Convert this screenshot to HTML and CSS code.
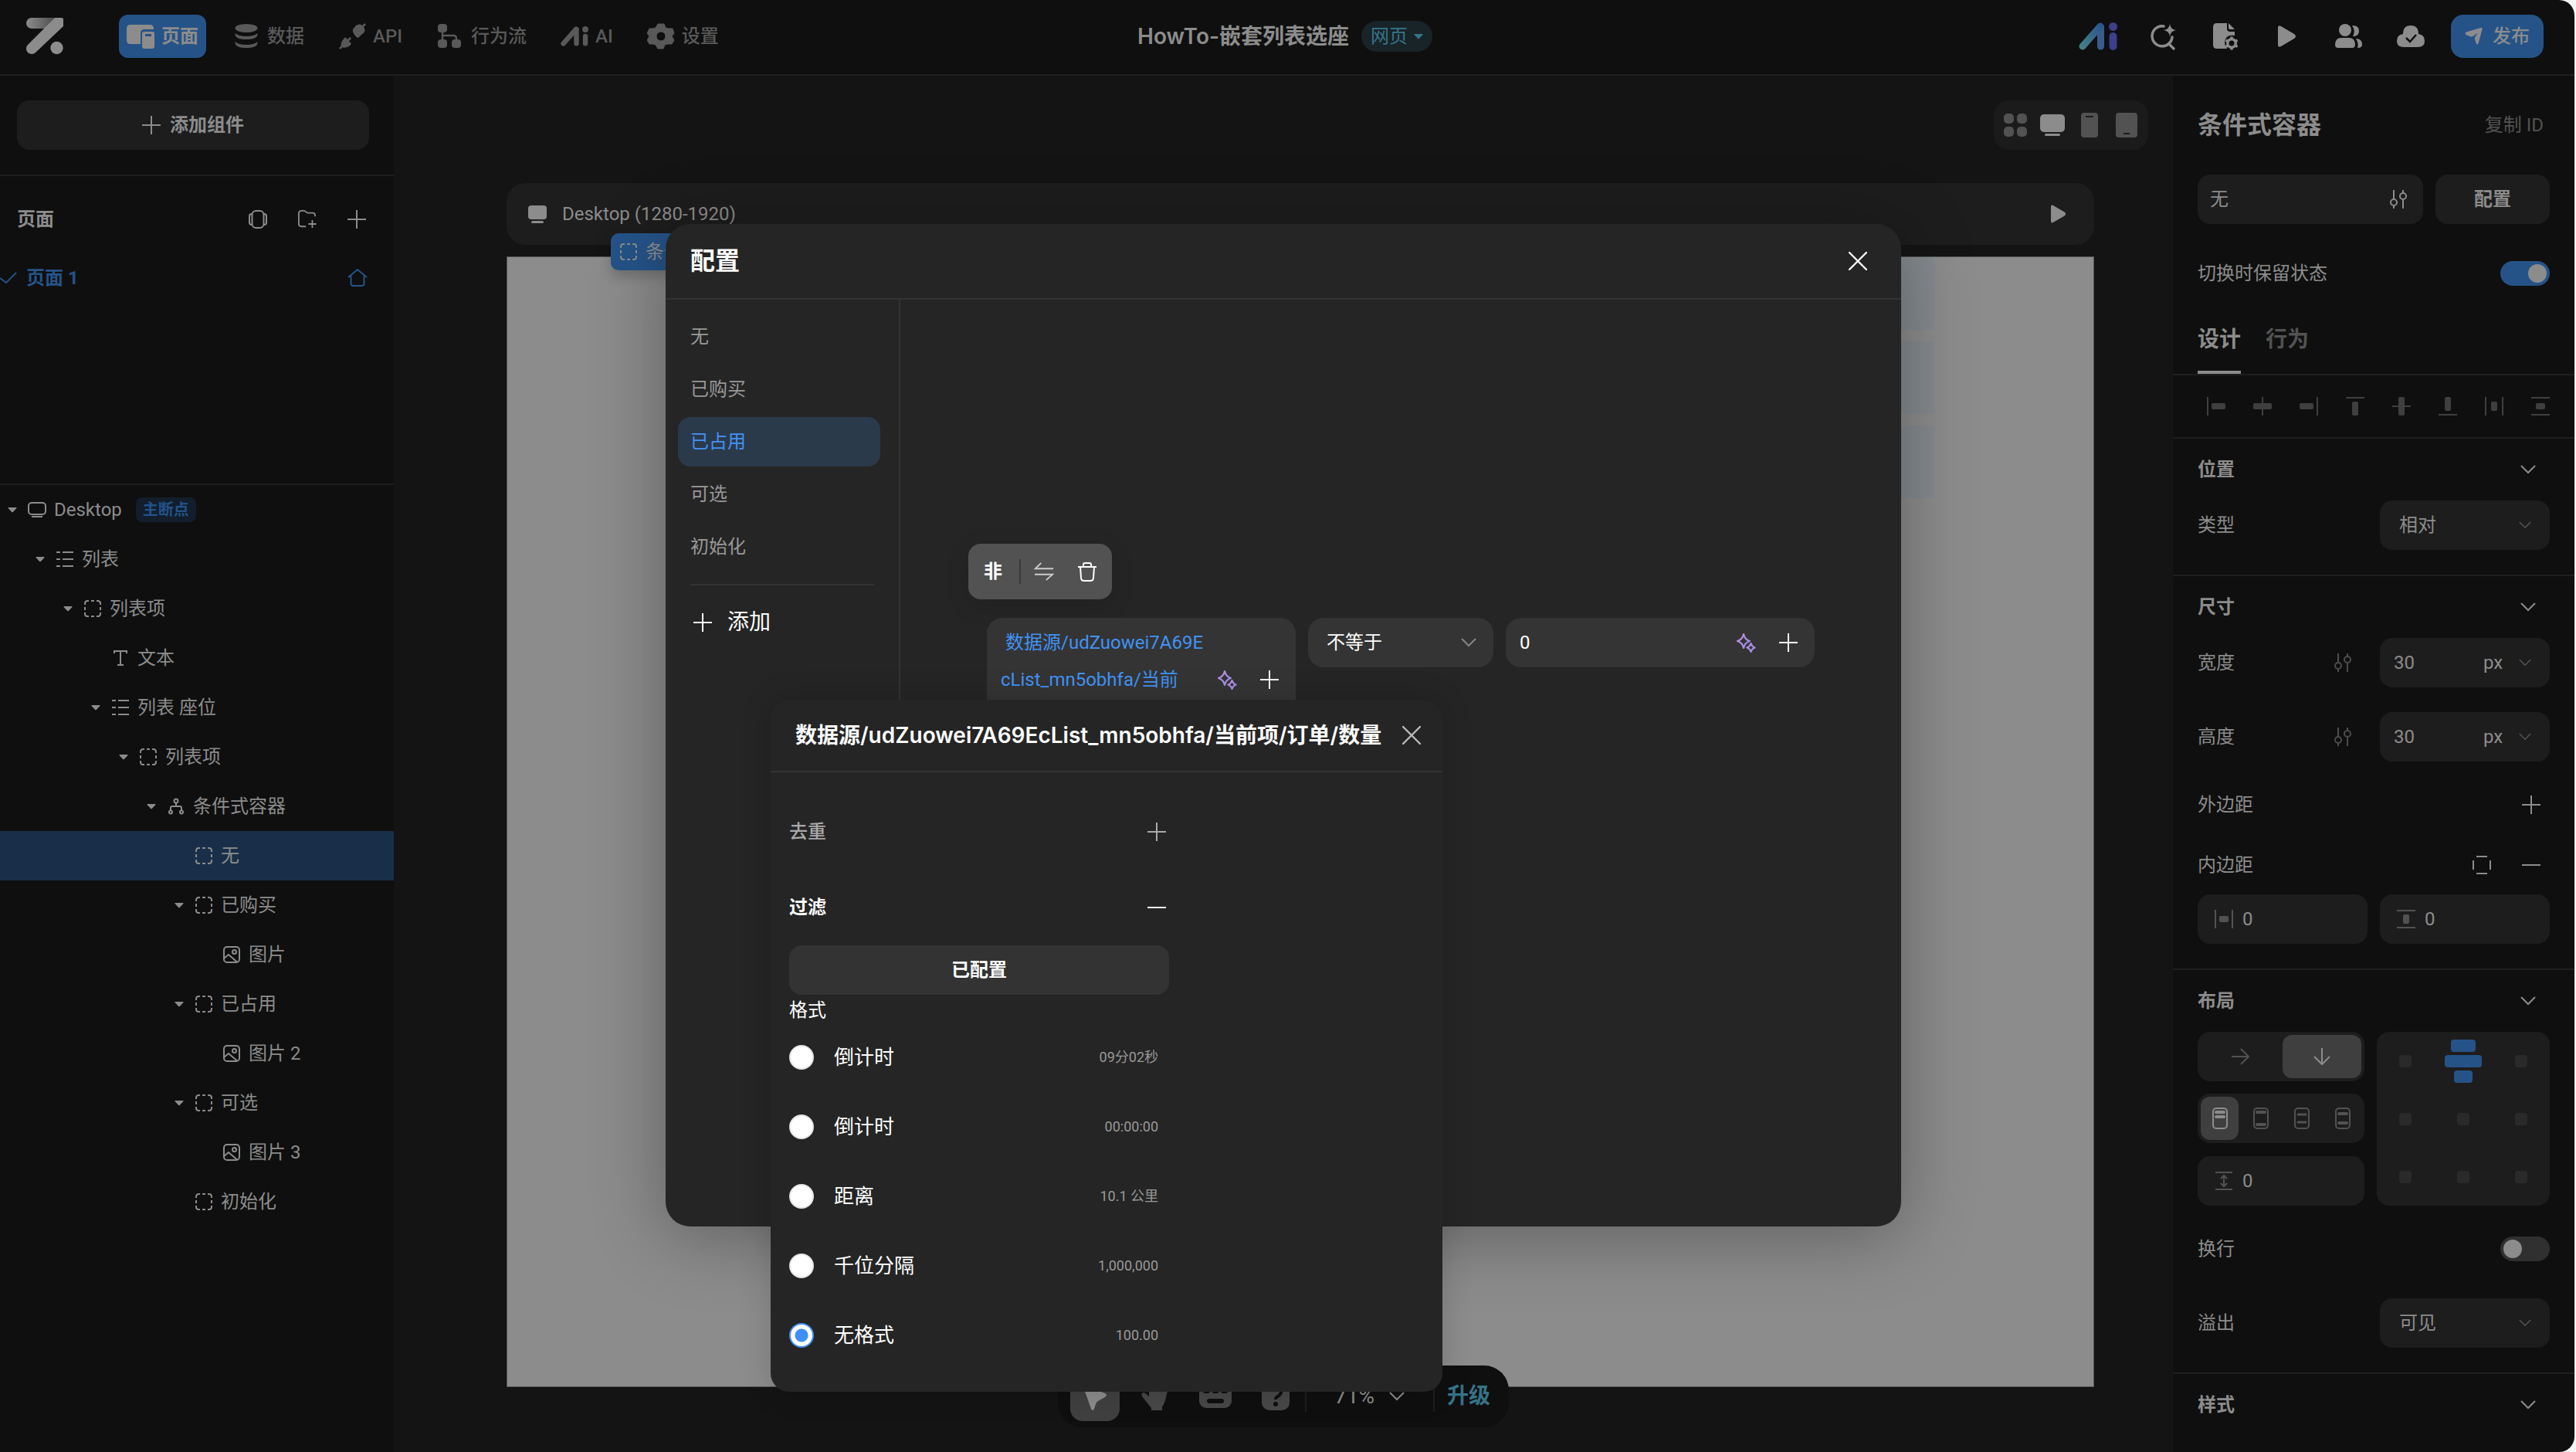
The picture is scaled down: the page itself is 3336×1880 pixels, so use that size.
FILE: index.html
```html
<!DOCTYPE html>
<html lang="zh-CN">
<head>
<meta charset="utf-8">
<title>HowTo-嵌套列表选座</title>
<link rel="stylesheet" href="styles.css">
</head>
<body>
<svg class="sprite" aria-hidden="true">
  <defs>
    <linearGradient id="ai-grad" gradientUnits="userSpaceOnUse" x1="3" y1="33" x2="30" y2="3"><stop offset="0" stop-color="#46808a"/><stop offset="1" stop-color="#28558c"/></linearGradient>
    <linearGradient id="spark-grad" x1="0" y1="0" x2="1" y2="1"><stop offset="0" stop-color="#c58be0"/><stop offset="1" stop-color="#8f8fe8"/></linearGradient>
    <linearGradient id="logo-grad" x1="0" y1="0" x2="1" y2="0"><stop offset="0" stop-color="#8c8c8c"/><stop offset="1" stop-color="#4c4c4c"/></linearGradient>
  </defs>
  <symbol id="i-plus" viewBox="0 0 24 24"><path d="M12 0v24M0 12h24" fill="none" stroke="currentColor" stroke-width="2"/></symbol>
  <symbol id="i-minus" viewBox="0 0 24 24"><path d="M0 12h24" fill="none" stroke="currentColor" stroke-width="2"/></symbol>
  <symbol id="i-close" viewBox="0 0 24 24"><path d="M1 1l22 22M23 1L1 23" fill="none" stroke="currentColor" stroke-width="2.4" stroke-linecap="round"/></symbol>
  <symbol id="i-down" viewBox="0 0 20 20"><path d="M1 5l9 9 9-9" fill="none" stroke="currentColor" stroke-width="2"/></symbol>
  <symbol id="i-caret" viewBox="0 0 12 12"><path d="M1 3h10q1 0 .4.9L7 8.8q-1 1-2 0L.6 3.900Q0 3 1 3z" fill="currentColor"/></symbol>
  <symbol id="i-desktop" viewBox="0 0 28 28"><rect x="2" y="3" width="24" height="18" rx="4" fill="currentColor"/><rect x="6" y="23" width="16" height="3" rx="1.500" fill="currentColor"/></symbol>
  <symbol id="i-desktop-line" viewBox="0 0 24 24"><rect x="1" y="3" width="22" height="15" rx="4" fill="none" stroke="currentColor" stroke-width="2"/><path d="M5 21h14" stroke="currentColor" stroke-width="2"/></symbol>
  <symbol id="i-list" viewBox="0 0 24 24"><path d="M1 3h5M9 3h14M1 12h5M9 12h14M1 21h5M9 21h14" stroke="currentColor" stroke-width="2"/></symbol>
  <symbol id="i-box" viewBox="0 0 24 24"><path d="M2 7V5.500Q2 2 5.500 2H7M10 2h4M17 2h1.500Q22 2 22 5.500V7M22 10v4M22 17v1.500Q22 22 18.500 22H17M14 22h-4M7 22H5.500Q2 22 2 18.500V17M2 14v-4" fill="none" stroke="currentColor" stroke-width="2"/></symbol>
  <symbol id="i-text" viewBox="0 0 24 24"><path d="M4 6V3h16v3M12 3v18M8 21h8" fill="none" stroke="currentColor" stroke-width="2"/></symbol>
  <symbol id="i-nodes" viewBox="0 0 24 24"><g fill="none" stroke="currentColor" stroke-width="2"><circle cx="12" cy="5" r="2.500"/><circle cx="5" cy="19.500" r="2"/><circle cx="19" cy="19.500" r="2"/><path d="M12 8v4M5 17v-3q0-2 2-2h10q2 0 2 2v3"/></g></symbol>
  <symbol id="i-image" viewBox="0 0 24 24"><g fill="none" stroke="currentColor" stroke-width="2"><rect x="2" y="2" width="20" height="20" rx="4"/><circle cx="15.500" cy="8.500" r="2.500"/><path d="M2 17l6-5 11 9.500"/></g></symbol>
  <symbol id="i-tune" viewBox="0 0 24 24"><g fill="none" stroke="currentColor" stroke-width="2"><path d="M6 0v13M6 20v4M18 4V0M18 11v13"/><circle cx="6" cy="16" r="4"/><circle cx="18" cy="8" r="4"/></g></symbol>
  <symbol id="i-play" viewBox="0 0 24 28"><path d="M0 3q0-4 4-2l17 10q4 3 0 6L4 27q-4 2-4-2z" fill="currentColor"/></symbol>
  <symbol id="i-spark" viewBox="0 0 26 26"><g fill="none" stroke="url(#spark-grad)" stroke-width="2.200" stroke-linejoin="round"><path d="M10 2q1.500 7 8 9-6.500 2-8 9-1.500-7-8-9 6.500-2 8-9z"/><path d="M19.500 14q1 4 5 5.500-4 1.500-5 5.500-1-4-5-5.500 4-1.500 5-5.500z"/></g></symbol>
  <symbol id="i-ai" viewBox="0 0 50 36"><g fill="none" stroke-linecap="round" stroke-width="9"><path d="M5 31L28 5"/><path d="M28.500 6v25M44.500 18v13"/></g><circle cx="44.500" cy="5.500" r="5.500" fill="currentColor" stroke="none"/></symbol>
  <symbol id="i-pages" viewBox="0 0 36 36"><path d="M5 3h25q5 0 5 5v1H23q-5 0-5 5v14H5q-5 0-5-5V8q0-5 5-5z" fill="currentColor"/><path fill-rule="evenodd" d="M23 12h10q3 0 3 3v16q0 3-3 3H23q-3 0-3-3V15q0-3 3-3zm1 3v3h8v-3z" fill="currentColor"/></symbol>
  <symbol id="i-data" viewBox="0 0 36 36"><g fill="currentColor"><ellipse cx="18" cy="7.500" rx="14.500" ry="5.500"/><path d="M3.500 14q4.500 4 14.500 4t14.500-4q1 8-14.500 8T3.500 14zM3.500 25q4.500 4 14.500 4t14.500-4q1 8-14.500 8T3.500 25z"/></g></symbol>
  <symbol id="i-api" viewBox="0 0 36 36"><g fill="currentColor"><path d="M19 9l4-5q6-4 10 2t-3 10l-4 4q-2 0-5-4t-2-7zM5 24l4-5 3 3 3-3 2 2-3 3 3 4-3 3q-6 3-9 1t0-8z"/><path d="M31 6l4-4M2 34l5-5" stroke="currentColor" stroke-width="2.500"/></g></symbol>
  <symbol id="i-flow" viewBox="0 0 36 36"><g fill="currentColor"><rect x="2" y="2" width="12" height="11" rx="4"/><rect x="2" y="22" width="12" height="11" rx="4"/><rect x="20" y="22" width="12" height="11" rx="4"/></g><path d="M8 10v14M8 17h14q4 0 4 4v3" fill="none" stroke="currentColor" stroke-width="2.500"/></symbol>
  <symbol id="i-gear" viewBox="0 0 36 36"><path fill-rule="evenodd" fill="currentColor" d="M14 2h8l2 5 4 1 5 0 2 6-3 4 3 5-3 5-6 0-3 1-2 5h-7l-3-5-3-1-5 0-3-5 3-5-3-4 3-6 5 0 3-1zM18 12a6 6 0 100 12 6 6 0 000-12z" stroke="currentColor" stroke-linejoin="round"/></symbol>
  <symbol id="i-send" viewBox="0 0 26 26"><path d="M22 1q3-1 2.500 2L19 23q-1 3-3 0l-2-6q-.5-2 1.500-4.500l3-4.500-6 4.500q-2 1.500-4 1L2 11q-3-2 0-4z" fill="currentColor"/></symbol>
</svg>

<div class="app">
  <header class="topbar">
    <nav class="topnav">
      <a class="logo" href="#" aria-label="首页"><svg viewBox="0 0 48 48"><path d="M7 0h31v14H7A7 7 0 017 0z" fill="url(#logo-grad)"/><path d="M37 0h9q2 0 2 2v9L12 45A7 7 0 012 35z" fill="#8c8c8c"/><circle cx="39.500" cy="39" r="8.200" fill="#8c8c8c"/></svg></a>
      <a class="navitem is-active" href="#"><svg><use href="#i-pages"/></svg>页面</a>
      <a class="navitem" href="#"><svg><use href="#i-data"/></svg>数据</a>
      <a class="navitem" href="#"><svg><use href="#i-api"/></svg>API</a>
      <a class="navitem" href="#"><svg><use href="#i-flow"/></svg>行为流</a>
      <a class="navitem" href="#"><svg class="ai-mono"><use href="#i-ai"/></svg>AI</a>
      <a class="navitem" href="#"><svg><use href="#i-gear"/></svg>设置</a>
    </nav>
    <div class="project">
      <h1>HowTo-嵌套列表选座</h1>
      <button class="kind" type="button">网页<svg><use href="#i-caret"/></svg></button>
    </div>
    <div class="actions">
      <button class="action action-ai" type="button" aria-label="AI"><svg viewBox="0 0 50 36"><path d="M28.500 6v25" stroke="#3a5c8c" stroke-width="9" stroke-linecap="round"/><path d="M5 31L28 5" fill="none" stroke="url(#ai-grad)" stroke-linecap="round" stroke-width="9"/><path d="M44.500 18v13" stroke="#3b3f8c" stroke-width="10" stroke-linecap="round"/><circle cx="44.500" cy="5.500" r="5.500" fill="#3b3f8c"/></svg></button>
      <button class="action" type="button" aria-label="搜索"><svg viewBox="0 0 36 36"><path d="M18 5A13 13 0 1029 19M25 28l6 6" fill="none" stroke="currentColor" stroke-width="3.500" stroke-linecap="round"/><path d="M26 2q1 7 8 8-7 1-8 8-1-7-8-8 7-1 8-8z" fill="currentColor"/></svg></button>
      <button class="action" type="button" aria-label="页面设置"><svg viewBox="0 0 36 36"><path d="M7 1h13v7q0 4 4 4h6v5q-12-2-13 9 0 4 3 8H7q-5 0-5-5V6q0-5 5-5z" fill="currentColor"/><path d="M22 1l8 8h-6q-2 0-2-2z" fill="currentColor"/><circle cx="26" cy="27" r="5" fill="none" stroke="currentColor" stroke-width="4"/><path d="M26 18.500v17M18.500 23l15 8.500M18.500 31.500l15-8.500" stroke="currentColor" stroke-width="3.500"/><circle cx="26" cy="27" r="3.500" fill="#0f0f0f"/></svg></button>
      <button class="action" type="button" aria-label="预览"><svg class="play"><use href="#i-play"/></svg></button>
      <button class="action" type="button" aria-label="协作"><svg viewBox="0 0 36 36"><g fill="currentColor"><circle cx="13" cy="10" r="8"/><path d="M0 29q0-9 8-9h10q8 0 8 9 0 4-4 4H4q-4 0-4-4z"/><path d="M22 4q9 0 9 7t-8 7q4-7-1-14zM27 21q8 0 8 8 0 4-6 4 2-6-2-12z"/></g></svg></button>
      <button class="action" type="button" aria-label="已保存"><svg viewBox="0 0 36 36"><path d="M9 32q-9 0-9-8t8-9q0-11 10-11t10 11q8 1 8 9t-9 8z" fill="currentColor"/><path d="M12 20l5 5 8-9" fill="none" stroke="#0f0f0f" stroke-width="2.500"/></svg></button>
      <button class="publish" type="button"><svg><use href="#i-send"/></svg>发布</button>
    </div>
  </header>

  <div class="workspace">
    <aside class="left">
      <div class="addwrap"><button class="addcomp" type="button"><svg><use href="#i-plus"/></svg>添加组件</button></div>
      <section class="pages">
        <div class="pages-head">
          <h2>页面</h2>
          <button type="button" aria-label="弹窗"><svg viewBox="0 0 24 24"><g fill="none" stroke="currentColor" stroke-width="2"><rect x="4.500" y="1" width="15" height="22" rx="5"/><path d="M4 5q-3 0-3 3v8q0 3 3 3M20 5q3 0 3 3v8q0 3-3 3"/></g></svg></button>
          <button type="button" aria-label="新建文件夹"><svg viewBox="0 0 26 26"><path d="M11 23H5q-4 0-4-4V5q0-4 4-4h3q2 0 3 1.500T14 4h6q4 0 4 4v1M20 14v11M14.500 19.500h11" fill="none" stroke="currentColor" stroke-width="2"/></svg></button>
          <button type="button" aria-label="新建页面"><svg><use href="#i-plus"/></svg></button>
        </div>
        <a class="pagerow" href="#">
          <svg viewBox="0 0 22 16"><path d="M0 8l8 6L21 1" fill="none" stroke="currentColor" stroke-width="2"/></svg>
          <span>页面 1</span>
          <svg class="home" viewBox="0 0 26 24"><path d="M1 11L13 1l12 10M4.500 9v10q0 3 3 3h11q3 0 3-3V9" fill="none" stroke="currentColor" stroke-width="2"/></svg>
        </a>
      </section>
      <ul class="tree">
        <li class="lv0"><svg class="caret"><use href="#i-caret"/></svg><svg class="ico"><use href="#i-desktop-line"/></svg>Desktop<em>主断点</em></li>
        <li class="lv1"><svg class="caret"><use href="#i-caret"/></svg><svg class="ico"><use href="#i-list"/></svg>列表</li>
        <li class="lv2"><svg class="caret"><use href="#i-caret"/></svg><svg class="ico"><use href="#i-box"/></svg>列表项</li>
        <li class="lv3"><span class="caret"></span><svg class="ico"><use href="#i-text"/></svg>文本</li>
        <li class="lv3"><svg class="caret"><use href="#i-caret"/></svg><svg class="ico"><use href="#i-list"/></svg>列表 座位</li>
        <li class="lv4"><svg class="caret"><use href="#i-caret"/></svg><svg class="ico"><use href="#i-box"/></svg>列表项</li>
        <li class="lv5"><svg class="caret"><use href="#i-caret"/></svg><svg class="ico"><use href="#i-nodes"/></svg>条件式容器</li>
        <li class="lv6 is-selected"><span class="caret"></span><svg class="ico"><use href="#i-box"/></svg>无</li>
        <li class="lv6"><svg class="caret"><use href="#i-caret"/></svg><svg class="ico"><use href="#i-box"/></svg>已购买</li>
        <li class="lv7"><span class="caret"></span><svg class="ico"><use href="#i-image"/></svg>图片</li>
        <li class="lv6"><svg class="caret"><use href="#i-caret"/></svg><svg class="ico"><use href="#i-box"/></svg>已占用</li>
        <li class="lv7"><span class="caret"></span><svg class="ico"><use href="#i-image"/></svg>图片 2</li>
        <li class="lv6"><svg class="caret"><use href="#i-caret"/></svg><svg class="ico"><use href="#i-box"/></svg>可选</li>
        <li class="lv7"><span class="caret"></span><svg class="ico"><use href="#i-image"/></svg>图片 3</li>
        <li class="lv6"><span class="caret"></span><svg class="ico"><use href="#i-box"/></svg>初始化</li>
      </ul>
    </aside>

    <main class="canvas">
      <div class="devices">
        <button type="button" aria-label="全部"><svg viewBox="0 0 32 32"><g fill="currentColor"><rect x="1" y="1" width="13" height="13" rx="5"/><rect x="18" y="1" width="13" height="13" rx="5"/><rect x="1" y="18" width="13" height="13" rx="5"/><rect x="18" y="18" width="13" height="13" rx="5"/></g></svg></button>
        <button class="on" type="button" aria-label="桌面"><svg viewBox="0 0 32 32"><rect y="2" width="32" height="23" rx="5" fill="currentColor"/><rect x="6" y="27" width="20" height="3" rx="1.500" fill="currentColor"/></svg></button>
        <button type="button" aria-label="手机"><svg viewBox="0 0 32 32"><path fill-rule="evenodd" fill="currentColor" d="M9 0h14q4 0 4 4v24q0 4-4 4H9q-4 0-4-4V4q0-4 4-4zm2 4v2h10V4z"/></svg></button>
        <button type="button" aria-label="平板"><svg viewBox="0 0 32 32"><path fill-rule="evenodd" fill="currentColor" d="M6 0h20q4 0 4 4v24q0 4-4 4H6q-4 0-4-4V4q0-4 4-4zm6 26v2h8v-2z"/></svg></button>
      </div>
      <div class="framebar">
        <svg><use href="#i-desktop"/></svg><span>Desktop (1280-1920)</span>
        <button type="button" aria-label="预览"><svg><use href="#i-play"/></svg></button>
        <div class="tag"><svg><use href="#i-box"/></svg>条件</div>
      </div>
      <div class="frame"><div class="ghosts"><i></i><i></i><i></i></div></div>

      <div class="dock">
        <button class="tool on" type="button" aria-label="选择"><svg viewBox="0 0 36 36"><path d="M3 6q-1-4 3-3l25 11q4 2 0 5l-9 5q-2 1-3 4l-2 6q-2 4-4 0z" fill="currentColor"/></svg></button>
        <button class="tool" type="button" aria-label="移动"><svg viewBox="0 0 36 36"><path d="M10 16V6q3-4 5 0V3q3-4 5 0v3q3-4 5 0v4q5-2 9 1l-3 12q-2 6-4 8v5H13v-3L1 18q-2-5 3-5l6 5z" fill="currentColor"/></svg></button>
        <button class="tool" type="button" aria-label="快捷键"><svg class="keys" viewBox="0 0 42 36"><rect y="2" width="42" height="31" rx="9" fill="currentColor"/><path d="M8 11h3M19.500 11h3M31 11h3M13 24h16" stroke="#0f0f0f" stroke-width="6" stroke-linecap="round"/></svg></button>
        <button class="tool" type="button" aria-label="帮助"><svg viewBox="0 0 36 36"><rect width="36" height="36" rx="10" fill="currentColor"/><path d="M12 12q1-6 7-6 7 1 6 7-1 3-4 5-3 1-3 4" fill="none" stroke="#0f0f0f" stroke-width="4"/><circle cx="18" cy="28" r="3" fill="#0f0f0f"/></svg></button>
        <button class="zoomlevel" type="button">71%<svg><use href="#i-down"/></svg></button>
        <button class="upgrade" type="button">升级</button>
      </div>

      <div class="modal" role="dialog" aria-labelledby="modal-title">
        <div class="modal-head"><h2 id="modal-title">配置</h2><button type="button" aria-label="关闭"><svg><use href="#i-close"/></svg></button></div>
        <div class="modal-body">
          <div class="states">
            <button type="button">无</button>
            <button type="button">已购买</button>
            <button class="on" type="button">已占用</button>
            <button type="button">可选</button>
            <button type="button">初始化</button>
            <hr>
            <button class="addstate" type="button"><svg><use href="#i-plus"/></svg>添加</button>
          </div>
          <div class="conditions">
            <div class="condtools">
              <button class="not" type="button">非</button>
              <button class="swap" type="button" aria-label="切换"><svg viewBox="0 0 28 26"><path d="M10 1L2 9h25M1 17h25l-9 8" fill="none" stroke="currentColor" stroke-width="2"/></svg></button>
              <button type="button" aria-label="删除"><svg viewBox="0 0 26 26"><path d="M1 7h24M8 7V4q0-2 2-2h6q2 0 2 2v3M4 7l1 14q0 4 4 4h8q4 0 4-4l1-14" fill="none" stroke="currentColor" stroke-width="2"/></svg></button>
            </div>
            <div class="cond">
              <div class="expr"><p><span>数据源/udZuowei7A69E</span><br>cList_mn5obhfa/当前</p><button type="button" aria-label="AI 生成"><svg class="spark"><use href="#i-spark"/></svg></button><button type="button" aria-label="添加表达式"><svg><use href="#i-plus"/></svg></button></div>
              <div class="pick"><select aria-label="比较"><option>不等于</option></select><svg><use href="#i-down"/></svg></div>
              <div class="value"><input type="text" value="0" aria-label="值"><button type="button" aria-label="AI 生成"><svg class="spark"><use href="#i-spark"/></svg></button><button type="button" aria-label="添加值"><svg><use href="#i-plus"/></svg></button></div>
            </div>
          </div>
        </div>

        <div class="popover">
          <div class="pop-head"><h3>数据源/udZuowei7A69EcList_mn5obhfa/当前项/订单/数量</h3><button type="button" aria-label="关闭"><svg><use href="#i-close"/></svg></button></div>
          <div class="pop-body">
            <div class="optrow muted"><span>去重</span><button type="button" aria-label="添加去重"><svg><use href="#i-plus"/></svg></button></div>
            <div class="optrow"><span>过滤</span><button type="button" aria-label="移除过滤"><svg><use href="#i-minus"/></svg></button></div>
            <button class="configured" type="button">已配置</button>
            <p class="fmt-title">格式</p>
            <label class="fmt"><input type="radio" name="fmt"><span>倒计时</span><small>09分02秒</small></label>
            <label class="fmt"><input type="radio" name="fmt"><span>倒计时</span><small>00:00:00</small></label>
            <label class="fmt"><input type="radio" name="fmt"><span>距离</span><small>10.1 公里</small></label>
            <label class="fmt"><input type="radio" name="fmt"><span>千位分隔</span><small>1,000,000</small></label>
            <label class="fmt"><input type="radio" name="fmt" checked><span>无格式</span><small>100.00</small></label>
          </div>
        </div>
      </div>
    </main>

    <aside class="right">
      <div class="insp-head"><h2>条件式容器</h2><button type="button">复制 ID</button></div>
      <div class="insp-state"><div class="field"><input type="text" value="无" aria-label="状态"><svg class="bright"><use href="#i-tune"/></svg></div><button type="button">配置</button></div>
      <label class="insp-keep">切换时保留状态<input class="switch" type="checkbox" checked></label>
      <div class="tabs"><button class="on" type="button">设计</button><button type="button">行为</button></div>
      <div class="aligns">
        <button type="button" aria-label="左对齐"><svg viewBox="0 0 24 24"><path d="M1 0v24" stroke="currentColor" stroke-width="2"/><rect x="6" y="8" width="18" height="8" rx="2" fill="currentColor"/></svg></button>
        <button type="button" aria-label="水平居中"><svg viewBox="0 0 24 24"><path d="M12 0v24" stroke="currentColor" stroke-width="2"/><rect y="8" width="24" height="8" rx="2" fill="currentColor"/></svg></button>
        <button type="button" aria-label="右对齐"><svg viewBox="0 0 24 24"><path d="M23 0v24" stroke="currentColor" stroke-width="2"/><rect y="8" width="18" height="8" rx="2" fill="currentColor"/></svg></button>
        <button type="button" aria-label="上对齐"><svg viewBox="0 0 24 24"><path d="M0 1h24" stroke="currentColor" stroke-width="2"/><rect x="8" y="6" width="8" height="18" rx="2" fill="currentColor"/></svg></button>
        <button type="button" aria-label="垂直居中"><svg viewBox="0 0 24 24"><path d="M0 12h24" stroke="currentColor" stroke-width="2"/><rect x="8" width="8" height="24" rx="2" fill="currentColor"/></svg></button>
        <button type="button" aria-label="下对齐"><svg viewBox="0 0 24 24"><path d="M0 23h24" stroke="currentColor" stroke-width="2"/><rect x="8" width="8" height="18" rx="2" fill="currentColor"/></svg></button>
        <button type="button" aria-label="水平分布"><svg viewBox="0 0 24 24"><path d="M1 0v24M23 0v24" stroke="currentColor" stroke-width="2"/><rect x="8" y="6" width="8" height="12" rx="2" fill="currentColor"/></svg></button>
        <button type="button" aria-label="垂直分布"><svg viewBox="0 0 24 24"><path d="M0 1h24M0 23h24" stroke="currentColor" stroke-width="2"/><rect x="6" y="8" width="12" height="8" rx="2" fill="currentColor"/></svg></button>
      </div>

      <section class="sec">
        <h3>位置<svg><use href="#i-down"/></svg></h3>
        <div class="prop"><label for="ptype">类型</label><div class="field sel"><select id="ptype"><option>相对</option></select><svg><use href="#i-down"/></svg></div></div>
      </section>

      <section class="sec">
        <h3>尺寸<svg><use href="#i-down"/></svg></h3>
        <div class="prop"><label for="pw">宽度</label><svg class="tune"><use href="#i-tune"/></svg><div class="field unit"><input id="pw" type="text" value="30"><select aria-label="宽度单位"><option>px</option></select><svg><use href="#i-down"/></svg></div></div>
        <div class="prop next"><label for="ph">高度</label><svg class="tune"><use href="#i-tune"/></svg><div class="field unit"><input id="ph" type="text" value="30"><select aria-label="高度单位"><option>px</option></select><svg><use href="#i-down"/></svg></div></div>
        <div class="line margin"><span>外边距</span><button type="button" aria-label="添加外边距"><svg><use href="#i-plus"/></svg></button></div>
        <div class="line"><span>内边距</span><button type="button" aria-label="四边"><svg viewBox="0 0 24 24"><path d="M5 1h14M5 23h14M1 6v12M23 6v12" stroke="currentColor" stroke-width="2"/></svg></button><button type="button" aria-label="移除内边距"><svg><use href="#i-minus"/></svg></button></div>
        <div class="pair">
          <div class="field num"><svg viewBox="0 0 24 24"><path d="M1 0v24M23 0v24" stroke="currentColor" stroke-width="2"/><rect x="6" y="8" width="12" height="8" rx="2" fill="currentColor"/></svg><input type="text" value="0" aria-label="水平内边距"></div>
          <div class="field num"><svg viewBox="0 0 24 24"><path d="M0 1h24M0 23h24" stroke="currentColor" stroke-width="2"/><rect x="8" y="6" width="8" height="12" rx="2" fill="currentColor"/></svg><input type="text" value="0" aria-label="垂直内边距"></div>
        </div>
      </section>

      <section class="sec">
        <h3>布局<svg><use href="#i-down"/></svg></h3>
        <div class="layout">
          <div class="layout-left">
            <div class="seg">
              <button type="button" aria-label="横向"><svg viewBox="0 0 24 24"><path d="M1 12h22M13 2l10 10-10 10" fill="none" stroke="currentColor" stroke-width="2"/></svg></button>
              <button class="on" type="button" aria-label="纵向"><svg viewBox="0 0 24 24"><path d="M12 1v21M2 12l10 10 10-10" fill="none" stroke="currentColor" stroke-width="2"/></svg></button>
            </div>
            <div class="seg four">
              <button class="on" type="button" aria-label="靠前"><svg viewBox="0 0 20 28"><rect x="1" y="1" width="18" height="26" rx="4" fill="none" stroke="currentColor" stroke-width="2"/><path d="M5 6h10M5 12h10" stroke="currentColor" stroke-width="4" stroke-linecap="round"/></svg></button>
              <button type="button" aria-label="两端"><svg viewBox="0 0 20 28"><rect x="1" y="1" width="18" height="26" rx="4" fill="none" stroke="currentColor" stroke-width="2"/><path d="M5 6h10M5 22h10" stroke="currentColor" stroke-width="4" stroke-linecap="round"/></svg></button>
              <button type="button" aria-label="均分"><svg viewBox="0 0 20 28"><rect x="1" y="1" width="18" height="26" rx="4" fill="none" stroke="currentColor" stroke-width="2"/><path d="M5 9h10M5 19h10" stroke="currentColor" stroke-width="3" stroke-linecap="round"/></svg></button>
              <button type="button" aria-label="环绕"><svg viewBox="0 0 20 28"><rect x="1" y="1" width="18" height="26" rx="4" fill="none" stroke="currentColor" stroke-width="2"/><path d="M5 8h10M5 20h10" stroke="currentColor" stroke-width="4" stroke-linecap="round"/></svg></button>
            </div>
            <div class="field num"><svg viewBox="0 0 24 24"><path d="M1 1h22M1 23h22M12 5v14M8 9l4-4 4 4M8 15l4 4 4-4" fill="none" stroke="currentColor" stroke-width="2"/></svg><input type="text" value="0" aria-label="间距"></div>
          </div>
          <div class="anchor"><i></i><b><u></u><u></u><u></u></b><i></i><i></i><i></i><i></i><i></i><i></i><i></i></div>
        </div>
        <label class="wrap">换行<input class="switch" type="checkbox"></label>
        <div class="prop overflow"><label for="pof">溢出</label><div class="field sel"><select id="pof"><option>可见</option></select><svg><use href="#i-down"/></svg></div></div>
      </section>

      <section class="sec last"><h3>样式<svg><use href="#i-down"/></svg></h3></section>
    </aside>
  </div>
</div>
</body>
</html>
```
FILE: styles.css
```css
:root {
  --bg: #0f0f0f;
  --field: #1d1d1d;
  --line: #1f1f1f;
  --text: #8c8c8c;
  --faint: #4c4c4c;
  --blue: #255388;
  --radius: 16px;
  --title-font: Inter, "Noto Sans CJK SC", sans-serif;
}

* { box-sizing: border-box; }

body {
  margin: 0;
  background: #f4f4f4;
  color: var(--text);
  font: 400 24px/32px Roboto, "Noto Sans CJK SC", sans-serif;
}

h1, h2, h3, p, ul { margin: 0; padding: 0; }

button, input, select {
  margin: 0;
  padding: 0;
  border: 0;
  background: none;
  color: inherit;
  font: inherit;
}

button { display: inline-flex; align-items: center; justify-content: center; }
select, input { appearance: none; }
input[type="text"] { width: 100%; min-width: 0; }
a { color: inherit; text-decoration: none; }
svg { flex: none; width: 24px; height: 24px; }
.sprite { position: absolute; width: 0; height: 0; }

.app {
  display: flex;
  flex-direction: column;
  height: 100vh;
  margin-right: 2px;
  overflow: hidden;
  border-radius: 0 20px 20px 0;
  background: var(--bg);
}

/* Top bar */
.topbar {
  display: grid;
  grid-template-columns: 1fr auto 1fr;
  align-items: center;
  height: 98px;
  padding: 0 40px 2px 34px;
  border-bottom: 2px solid var(--line);
}

.topnav { display: flex; align-items: center; gap: 24px; }
.logo { display: flex; margin-right: 48px; }
.logo svg { width: 48px; height: 48px; }

.navitem {
  display: flex;
  align-items: center;
  gap: 9px;
  height: 56px;
  padding: 0 10px;
  border-radius: 12px;
  color: #595959;
  font-weight: 500;
}
.navitem svg { width: 36px; height: 36px; }
.navitem.is-active { background: var(--blue); color: var(--text); font-weight: 700; }
.ai-mono { stroke: currentColor; }

.project { display: flex; align-items: center; gap: 16px; }
.project h1 { font-family: var(--title-font); font-size: 28px; font-weight: 600; line-height: 40px; }
.kind {
  gap: 8px;
  height: 40px;
  padding: 0 12px;
  border-radius: 20px;
  background: #182427;
  color: #36748a;
  font-size: 24px;
}
.kind svg { width: 12px; height: 12px; }

.actions { display: flex; align-items: center; justify-content: flex-end; gap: 40px; }
.action { width: 40px; height: 40px; }
.action svg { width: 36px; height: 36px; }
.action-ai { width: 50px; }
.action-ai svg { width: 50px; }
.action .play { width: 26px; height: 28px; }
.publish {
  gap: 12px;
  width: 120px;
  height: 56px;
  margin-left: -8px;
  border-radius: var(--radius);
  background: var(--blue);
  font-weight: 500;
}

.workspace { display: flex; flex: 1; min-height: 0; }

/* Left side */
.left { flex: none; width: 510px; overflow: hidden; }
.addwrap { padding: 32px 32px 32px 22px; border-bottom: 2px solid var(--line); }
.addcomp {
  gap: 12px;
  width: 100%;
  height: 64px;
  border-radius: var(--radius);
  background: var(--field);
  font-weight: 700;
}
.pages { min-height: 400px; padding-top: 24px; border-bottom: 2px solid var(--line); }
.pages-head {
  display: flex;
  align-items: center;
  gap: 40px;
  height: 64px;
  margin-bottom: 12px;
  padding: 0 36px 0 22px;
}
.pages-head h2 { flex: 1; font-size: 24px; font-weight: 700; }
.pagerow {
  display: flex;
  align-items: center;
  gap: 12px;
  height: 64px;
  padding-right: 34px;
  color: var(--blue);
  font-weight: 700;
}
.pagerow span { flex: 1; }
.pagerow svg { width: 22px; height: 16px; }
.pagerow .home { width: 26px; height: 24px; }

.tree { list-style: none; }
.tree li { display: flex; align-items: center; height: 64px; }
.tree .caret { flex: none; width: 12px; height: 12px; margin: 0 10px; }
.tree .ico { margin: 0 10px 0 4px; }
.tree em {
  margin-left: 18px;
  padding: 0 9px;
  border-radius: 8px;
  background: #121e2b;
  color: #22528a;
  font-size: 20px;
  font-style: normal;
  font-weight: 700;
}
.tree .is-selected { background: #192f49; }
.lv1 { padding-left: 36px; }
.lv2 { padding-left: 72px; }
.lv3 { padding-left: 108px; }
.lv4 { padding-left: 144px; }
.lv5 { padding-left: 180px; }
.lv6 { padding-left: 216px; }
.lv7 { padding-left: 252px; }

/* Canvas */
.canvas {
  position: relative;
  display: flex;
  flex: 1;
  flex-direction: column;
  padding: 32px 102px 84px 146px;
  background: #141414;
}
.devices {
  display: flex;
  align-self: flex-end;
  gap: 16px;
  height: 64px;
  margin-right: -70px;
  padding: 0 12px;
  border-radius: 20px;
  background: #1b1b1b;
  color: #525252;
}
.devices svg { width: 32px; height: 32px; }
.devices .on { color: var(--text); }
.framebar {
  position: relative;
  display: flex;
  align-items: center;
  gap: 18px;
  height: 80px;
  margin: 43px 0 15px;
  padding: 0 36px 0 26px;
  border-radius: 24px;
  background: var(--field);
}
.framebar > svg { width: 28px; height: 28px; }
.framebar span { flex: 1; }
.framebar button svg { width: 20px; height: 24px; }
.tag {
  position: absolute;
  top: 65px;
  left: 135px;
  display: flex;
  align-items: center;
  gap: 10px;
  height: 48px;
  padding: 0 11px;
  border-radius: 10px;
  background: var(--blue);
  box-shadow: 0 8px 16px rgba(0, 0, 0, .2);
  white-space: nowrap;
}
.frame { flex: 1; border: 1px solid #555; background: #8c8c8c; }
.ghosts { display: grid; gap: 15px; width: 400px; margin-left: 1448px; }
.ghosts i { height: 94px; background: #848a8f; }

.dock {
  position: absolute;
  bottom: 32px;
  left: 50%;
  display: flex;
  align-items: center;
  gap: 14px;
  width: 584px;
  height: 80px;
  margin-left: -292px;
  padding: 0 0 0 16px;
  border-radius: 32px;
  background: var(--bg);
  color: #484848;
  font-size: 28px;
}
.tool { flex: none; width: 64px; height: 64px; border-radius: 16px; }
.tool svg { width: 36px; height: 36px; }
.tool .keys { width: 42px; }
.tool.on { background: #404040; color: var(--text); }
.dock .zoomlevel {
  gap: 18px;
  width: 168px;
  height: 40px;
  margin: 0 -8px;
  border: solid var(--line);
  border-width: 0 2px;
  color: var(--text);
}
.zoomlevel svg { width: 22px; height: 20px; }
.upgrade { flex: 1; padding-right: 14px; color: #36748a; font-weight: 700; }

/* Configuration dialog */
.modal {
  position: absolute;
  top: 192px;
  left: 50%;
  width: 1600px;
  margin-left: -800px;
  border-radius: 32px;
  background: #252525;
  box-shadow: 0 12px 96px rgba(0, 0, 0, .32);
  color: #fff;
}
.modal-head {
  display: flex;
  align-items: center;
  justify-content: space-between;
  height: 98px;
  padding: 0 44px 0 32px;
  border-bottom: 2px solid #333;
}
.modal-head h2 { font-size: 32px; font-weight: 700; line-height: 48px; }
.modal-body { display: flex; min-height: 1200px; }
.states {
  display: flex;
  flex: none;
  flex-direction: column;
  gap: 4px;
  width: 304px;
  padding: 16px 24px 0 16px;
  border-right: 2px solid #333;
}
.states button {
  justify-content: flex-start;
  height: 64px;
  padding-left: 16px;
  border-radius: var(--radius);
  color: #989898;
}
.states .on { background: #2b3a4b; color: #4093f5; }
.states hr { width: 238px; height: 2px; margin: 12px 8px 12px 16px; border: 0; background: #333; }
.states .addstate { gap: 20px; padding-left: 20px; color: #fff; font-size: 28px; }

.conditions { flex: 1; padding: 316px 0 0 88px; }
.condtools {
  display: flex;
  align-items: center;
  gap: 16px;
  width: 186px;
  height: 72px;
  padding: 0 12px;
  border-radius: var(--radius);
  background: #525252;
  box-shadow: 0 8px 32px rgba(0, 0, 0, .12);
}
.condtools button { flex: none; width: 40px; height: 32px; }
.condtools .not { width: 56px; padding-right: 14px; border-right: 2px solid #3a3a3a; font-weight: 700; }
.condtools .not + button { margin-left: -6px; }
.condtools svg { width: 26px; height: 26px; }
.swap { color: #ccc; }
.cond { display: flex; align-items: flex-start; gap: 16px; margin: 24px 0 0 24px; }
.expr, .pick, .value { display: flex; align-items: center; border-radius: 20px; background: #343434; }
.expr { gap: 30px; width: 400px; height: 160px; padding: 0 22px 0 18px; }
.expr p { flex: 1; align-self: flex-start; min-width: 0; padding-top: 8px; color: #4093f5; line-height: 48px; white-space: nowrap; }
.expr p span { padding-left: 6px; }
.expr .spark, .value .spark { width: 26px; height: 26px; }
.pick { width: 240px; height: 64px; padding: 0 22px 0 24px; }
.pick select { flex: 1; }
.pick svg { width: 20px; height: 20px; color: #858585; }
.value { gap: 30px; width: 400px; height: 64px; padding: 0 22px 0 18px; }
.value input { flex: 1; }

/* Data source popover */
.popover {
  position: absolute;
  top: 616px;
  left: 136px;
  width: 870px;
  border-radius: 24px;
  background: #252525;
  box-shadow: 0 0 40px rgba(0, 0, 0, .16);
}
.pop-head {
  display: flex;
  align-items: center;
  justify-content: space-between;
  height: 94px;
  padding: 0 28px 0 32px;
  border-bottom: 2px solid #333;
}
.pop-head h3 { font-family: var(--title-font); font-size: 28px; font-weight: 600; line-height: 40px; white-space: nowrap; }
.pop-head button { color: #bbb; }
.pop-body { width: 516px; height: 802px; padding: 28px 0 0 24px; }
.optrow {
  display: flex;
  align-items: center;
  justify-content: space-between;
  height: 98px;
  padding-right: 4px;
  font-weight: 700;
}
.muted { color: #aaa; font-weight: 500; }
.configured {
  width: 100%;
  height: 64px;
  border-radius: var(--radius);
  background: #333;
  font-weight: 700;
}
.fmt-title { padding-top: 4px; }
.fmt { display: flex; align-items: center; height: 90px; padding-right: 14px; font-size: 26px; }
.fmt span { flex: 1; }
.fmt small { color: #999; font-size: 18px; }
.fmt input {
  width: 32px;
  height: 32px;
  margin-right: 26px;
  border: 2px solid #e4e4e4;
  border-radius: 50%;
  background: #fff;
}
.fmt input:checked { border-color: #3f8ff7; background: radial-gradient(circle, #3f8ff7 8px, #fff 9px); }

/* Inspector */
.right { flex: none; width: 520px; overflow: hidden; }
.insp-head {
  display: flex;
  align-items: center;
  justify-content: space-between;
  height: 128px;
  padding: 0 40px 0 32px;
}
.insp-head h2 { font-size: 32px; font-weight: 700; line-height: 48px; }
.insp-head button { color: #525252; }
.insp-state { display: grid; grid-template-columns: 292px 148px; gap: 16px; padding-left: 32px; }
.insp-state button { border-radius: var(--radius); background: var(--field); font-weight: 700; }
.insp-keep, .wrap { display: flex; align-items: center; justify-content: space-between; }
.insp-keep { height: 128px; padding: 0 32px; }

.field {
  display: flex;
  align-items: center;
  height: 64px;
  padding: 0 20px 0 16px;
  border-radius: var(--radius);
  background: var(--field);
}
.field svg { color: #525252; }
.field .bright { color: var(--text); }
.switch {
  display: flex;
  align-items: center;
  width: 64px;
  height: 32px;
  padding: 0 4px;
  border-radius: 16px;
  background: #303030;
}
.switch::before { content: ""; width: 24px; height: 24px; border-radius: 50%; background: #8c8c8c; }
.switch:checked { justify-content: flex-end; background: var(--blue); }

.tabs { display: flex; gap: 32px; height: 68px; padding-left: 32px; border-bottom: 2px solid var(--line); }
.tabs button {
  align-items: flex-start;
  height: 66px;
  border-bottom: 4px solid transparent;
  color: #525252;
  font-size: 28px;
  font-weight: 700;
  line-height: 44px;
}
.tabs .on { border-color: var(--text); color: var(--text); }
.aligns {
  display: flex;
  justify-content: space-between;
  height: 82px;
  padding: 0 32px 0 44px;
  border-bottom: 2px solid var(--line);
  color: #3f3f3f;
}

.sec { padding: 0 32px 32px; border-bottom: 2px solid var(--line); }
.sec.last { border: 0; }
.sec h3 {
  display: flex;
  align-items: center;
  justify-content: space-between;
  height: 80px;
  padding-right: 18px;
  font-size: 24px;
  font-weight: 700;
}
.sec h3 svg { width: 20px; height: 20px; }
.prop { display: flex; align-items: center; }
.prop label { flex: 1; }
.prop .field { width: 220px; }
.prop.next { margin-top: 32px; }
.tune { margin-right: 36px; color: var(--faint); }
.sel select { flex: 1; padding-left: 9px; }
.field.sel { padding-right: 24px; }
.field.sel svg, .unit svg { width: 16px; height: 16px; }
.unit input { flex: 1; }
.unit select { margin-right: 20px; }
.field.unit { padding: 0 24px 0 18px; }
.line { display: flex; align-items: center; gap: 40px; height: 76px; padding-right: 12px; }
.line span { flex: 1; }
.line.margin { height: 80px; margin-top: 16px; }
.pair { display: grid; grid-template-columns: 220px 220px; gap: 16px; }
.field.num { gap: 12px; padding-left: 22px; }

.layout { display: grid; grid-template-columns: 216px 224px; gap: 16px; }
.layout-left { display: grid; gap: 16px; }
.seg {
  display: grid;
  grid-template-columns: 1fr 1fr;
  gap: 4px;
  height: 64px;
  padding: 4px;
  border-radius: var(--radius);
  background: var(--field);
  color: #525252;
}
.seg.four { grid-template-columns: repeat(4, 1fr); }
.seg button { border-radius: 12px; }
.seg .on { background: #3f3f3f; color: var(--text); }
.seg.four svg { width: 20px; height: 28px; }
.anchor {
  display: grid;
  grid-template-columns: repeat(3, 75px);
  grid-template-rows: repeat(3, 75px);
  place-content: center;
  place-items: center;
  border-radius: var(--radius);
  background: var(--field);
}
.anchor i { width: 16px; height: 16px; border-radius: 4px; background: #2a2a2a; }
.anchor b { display: grid; gap: 4px; justify-items: center; }
.anchor u { width: 48px; height: 16px; border-radius: 4px; background: var(--blue); }
.anchor u:first-child { width: 32px; }
.anchor u:last-child { width: 24px; }
.wrap { height: 112px; }
.overflow { margin-top: 8px; }
```
